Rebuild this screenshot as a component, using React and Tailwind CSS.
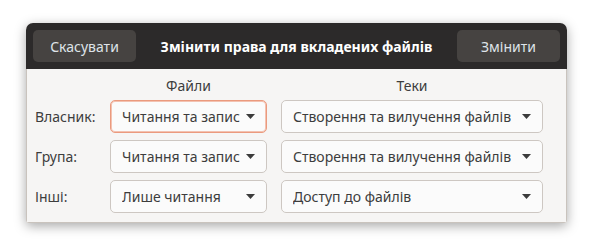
import React from 'react';

const font = { fontFamily: '"Noto Sans", "Open Sans", sans-serif' };

const Arrow = () => (
  <svg width="9" height="5" viewBox="0 0 9 5" className="shrink-0">
    <path d="M0 0 H9 L4.5 5 Z" fill="#3c3c3c" />
  </svg>
);

const Combo = ({ label, focused, wide }) => (
  <div
    className={`h-[33px] flex items-center justify-between pl-[11px] pr-[11px] rounded-[5px] border bg-[#fbfbfb] text-[14px] text-[#3d3d3d] ${
      focused ? 'border-[#eb9a7e] shadow-[inset_0_0_0_1px_#f3c2b1]' : 'border-[#cdc7c2]'
    } ${wide ? 'w-[262px]' : 'w-[157px]'}`}
  >
    <span className="whitespace-nowrap overflow-hidden">{label}</span>
    <Arrow />
  </div>
);

const rows = [
  { who: 'Власник:', files: 'Читання та запис', dirs: 'Створення та вилучення файлів', focused: true },
  { who: 'Група:', files: 'Читання та запис', dirs: 'Створення та вилучення файлів' },
  { who: 'Інші:', files: 'Лише читання', dirs: 'Доступ до файлів' },
];

const App = () => {
  return (
    <div className="w-[593px] h-[252px] bg-white pt-[23px] pl-[26px]" style={font}>
      <div className="w-[541px] rounded-t-[7px] rounded-b-[3px] shadow-[0_3px_12px_rgba(0,0,0,0.35)] overflow-hidden">
        {/* headerbar */}
        <div className="h-[46px] bg-[#2c2a2a] flex items-center justify-between px-[7px]">
          <button className="w-[103px] h-[32px] rounded-[5px] bg-[#464341] text-[#dfe3e8] text-[14px]">
            Скасувати
          </button>
          <div className="text-white font-bold text-[14px] whitespace-nowrap">
            Змінити права для вкладених файлів
          </div>
          <button className="w-[103px] h-[32px] rounded-[5px] bg-[#464341] text-[#dfe3e8] text-[14px]">
            Змінити
          </button>
        </div>

        {/* body */}
        <div className="h-[154px] bg-[#f6f5f4] border-x border-b border-[#c9c3bd] pl-[8px] pt-[9px]">
          <div className="grid grid-cols-[61px_157px_262px] gap-x-[14px] gap-y-[7px] items-center text-[14px] text-[#3d3d3d]">
            <div />
            <div className="text-center h-[16px] leading-[16px] -mb-[1px]">Файли</div>
            <div className="text-center h-[16px] leading-[16px] -mb-[1px]">Теки</div>
            {rows.map((r) => (
              <React.Fragment key={r.who}>
                <div className="whitespace-nowrap">{r.who}</div>
                <Combo label={r.files} focused={r.focused} />
                <Combo label={r.dirs} wide />
              </React.Fragment>
            ))}
          </div>
        </div>
      </div>
    </div>
  );
};

export default App;
